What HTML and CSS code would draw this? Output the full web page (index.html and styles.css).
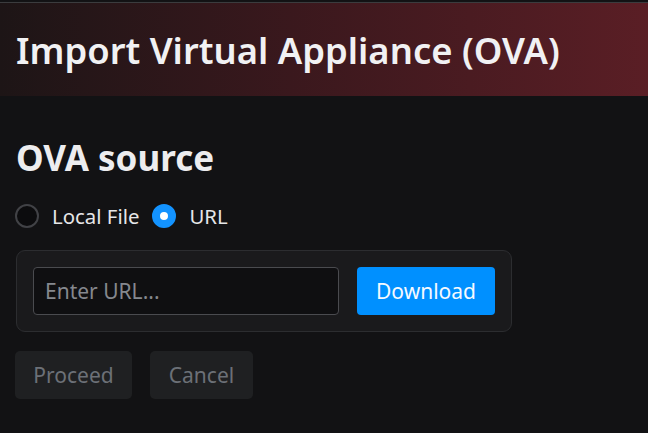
FILE: index.html
```html
<!DOCTYPE html>
<html>
<head>
<meta charset="utf-8">
<link rel="stylesheet" href="styles.css">
</head>
<body>
<div class="topline"></div>
<header class="header">
  <h1 class="title">Import Virtual Appliance (OVA)</h1>
</header>
<main class="content">
  <h2 class="section-title">OVA source</h2>
  <div class="radios">
    <label class="radio"><span class="dot"></span><span>Local File</span></label>
    <label class="radio"><span class="dot checked"></span><span>URL</span></label>
  </div>
  <div class="card">
    <input class="url-input" type="text" placeholder="Enter URL...">
    <button class="btn primary">Download</button>
  </div>
  <div class="actions">
    <button class="btn muted proceed">Proceed</button>
    <button class="btn muted cancel">Cancel</button>
  </div>
</main>
</body>
</html>
```
FILE: styles.css
```css
* { box-sizing: border-box; }
html, body { margin: 0; padding: 0; }
body {
  background: #121214;
  font-family: "Noto Sans", "Open Sans", sans-serif;
  color: #e8e8ea;
  width: 648px;
  height: 433px;
  overflow: hidden;
}
.topline {
  height: 3px;
  background: #131315;
  border-top: 1px solid #121214;
  border-bottom: 1px solid #3b3c3e;
}
.header {
  height: 93px;
  background: linear-gradient(90deg, #1d1516 0%, #3a181d 45%, #5a1e25 100%);
  display: flex;
  align-items: center;
  padding: 0 16px;
}
.title {
  margin: 0;
  font-size: 36.4px;
  font-weight: 600;
  color: #f1f1f3;
  line-height: 1;
  position: relative;
  top: 1px;
}
.content {
  padding: 42px 16px 0;
}
.section-title {
  margin: 0;
  font-size: 35px;
  font-weight: 700;
  line-height: 40px;
  color: #ededef;
}
.radios {
  display: flex;
  gap: 13px;
  margin-top: 25px;
  font-size: 20.4px;
  line-height: 26px;
}
.radio {
  display: flex;
  align-items: center;
  gap: 13px;
  color: #e6e6e8;
}
.dot {
  width: 24px;
  height: 24px;
  border-radius: 50%;
  border: 2px solid #414246;
  background: #0c0c0e;
  margin-left: -1px;
}
.dot.checked {
  border: 8px solid #1393ff;
  background: #ffffff;
  margin-left: 0;
}
.card {
  margin-top: 21px;
  width: 496px;
  height: 82px;
  border: 1px solid #2c2d30;
  border-radius: 9px;
  background: #1a1a1c;
  display: flex;
  align-items: center;
  padding: 0 16px;
  gap: 18px;
}
.url-input {
  width: 306px;
  height: 48px;
  border: 1px solid #4a4b4f;
  border-radius: 4px;
  background: #0f0f11;
  color: #e6e6e8;
  font-family: inherit;
  font-size: 21px;
  padding: 0 11px;
  outline: none;
}
.url-input::placeholder { color: #85888e; }
.btn {
  font-family: inherit;
  font-size: 21px;
  height: 48px;
  border: none;
  border-radius: 4px;
  padding: 0;
}
.primary {
  background: #0090ff;
  color: #f5f9ff;
  width: 138px;
}
.actions {
  display: flex;
  gap: 18px;
  margin-top: 19px;
  margin-left: -1px;
}
.muted {
  background: #1f2022;
  color: #6c7077;
  border-radius: 5px;
}
.proceed { width: 117px; }
.cancel { width: 103px; }
```
